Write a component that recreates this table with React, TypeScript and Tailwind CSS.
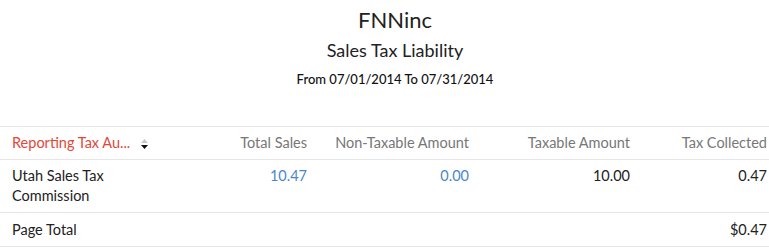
import { ReactNode } from "react";

type Col = { label: string; width: string };

const cols: Col[] = [
  { label: "Total Sales", width: "w-[149px]" },
  { label: "Non-Taxable Amount", width: "w-[162px]" },
  { label: "Taxable Amount", width: "w-[161px]" },
  { label: "Tax Collected", width: "w-[137px]" },
];

function Cell({ children, className = "" }: { children?: ReactNode; className?: string }) {
  return <td className={`px-3 align-top ${className}`}>{children}</td>;
}

function SortIcon() {
  return (
    <svg width="7" height="10" viewBox="0 0 7 10" className="ml-[11px] inline-block align-[-1px]">
      <path d="M3.5 0 L7 4 L0 4 Z" fill="#c8c8c8" />
      <path d="M0 6 L7 6 L3.5 10 Z" fill="#111" />
    </svg>
  );
}

export default function App() {
  return (
    <div
      className="w-[769px] h-[248px] overflow-hidden bg-white text-[#222]"
      style={{ fontFamily: "Lato, 'Open Sans', sans-serif" }}
    >
      <div className="w-[790px] text-center pt-[6px]">
        <h1 className="text-[22px] leading-[28px] text-[#222]">FNNinc</h1>
        <h2 className="text-[18px] leading-[20px] mt-[6px] text-[#222]">Sales Tax Liability</h2>
        <p className="text-[13px] leading-[16px] mt-[11px] font-medium text-[#111]">
          From 07/01/2014 To 07/31/2014
        </p>
      </div>

      <table className="mt-[39px] w-[779px] table-fixed border-collapse text-[14.5px] leading-[20px]">
        <colgroup>
          <col className="w-[170px]" />
          {cols.map((c) => (
            <col key={c.label} className={c.width} />
          ))}
        </colgroup>
        <thead>
          <tr className="border-t border-b border-[#e6e6e6] h-[33px]">
            <th className="px-3 text-left font-normal text-[#e2483a] whitespace-nowrap align-middle">
              Reporting Tax Au...
              <SortIcon />
            </th>
            {cols.map((c) => (
              <th key={c.label} className="px-3 text-right font-normal text-[#777] align-middle whitespace-nowrap">
                {c.label}
              </th>
            ))}
          </tr>
        </thead>
        <tbody>
          <tr className="border-b border-[#e6e6e6]">
            <Cell className="pt-[6px] pb-[6px]">Utah Sales Tax Commission</Cell>
            <Cell className="pt-[6px] text-right text-[#4a86cf]">10.47</Cell>
            <Cell className="pt-[6px] text-right text-[#4a86cf]">0.00</Cell>
            <Cell className="pt-[6px] text-right">10.00</Cell>
            <Cell className="pt-[6px] text-right">0.47</Cell>
          </tr>
          <tr className="border-b border-[#e6e6e6] h-[34px]">
            <td className="px-3 align-middle">Page Total</td>
            <td />
            <td />
            <td />
            <td className="px-3 text-right align-middle">$0.47</td>
          </tr>
        </tbody>
      </table>
    </div>
  );
}
